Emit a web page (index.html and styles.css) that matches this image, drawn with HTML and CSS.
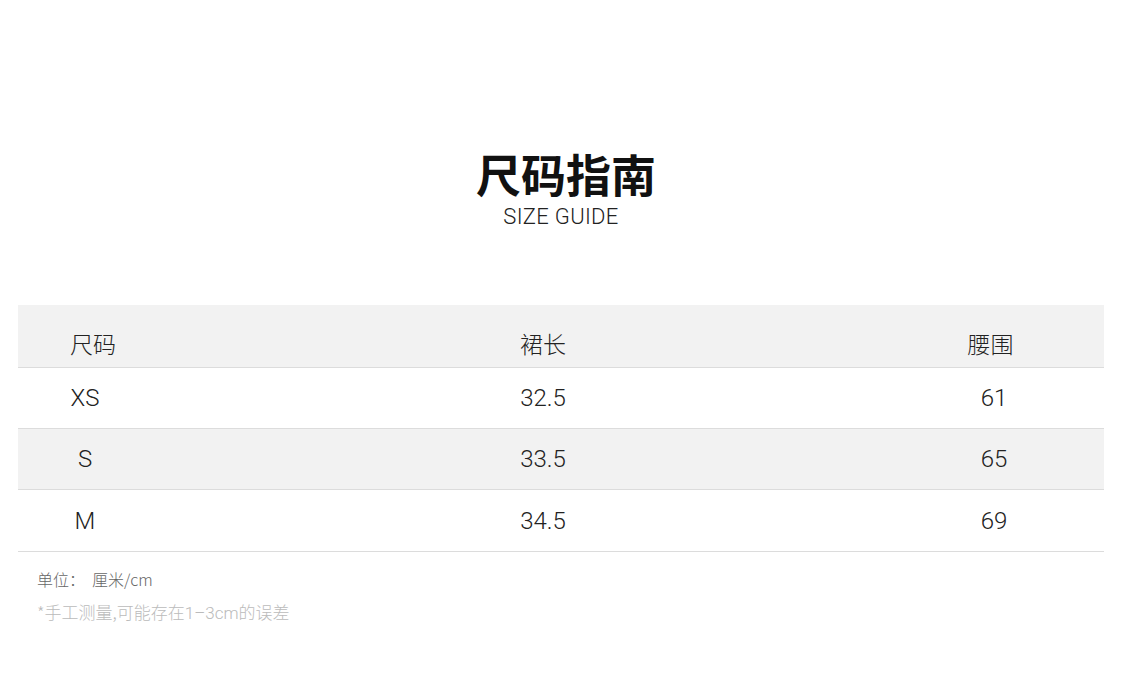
FILE: index.html
```html
<!DOCTYPE html>
<html lang="zh-CN">
<head>
<meta charset="utf-8">
<title>尺码指南</title>
<link rel="stylesheet" href="styles.css">
</head>
<body>
<div class="page">
  <header class="title">
    <h1 class="title-cn">尺码指南</h1>
    <div class="title-en">SIZE GUIDE</div>
  </header>
  <div class="table">
    <div class="row head">
      <div class="cell c1">尺码</div>
      <div class="cell c2">裙长</div>
      <div class="cell c3">腰围</div>
    </div>
    <div class="row">
      <div class="cell c1">XS</div>
      <div class="cell c2">32.5</div>
      <div class="cell c3">61</div>
    </div>
    <div class="row alt">
      <div class="cell c1">S</div>
      <div class="cell c2">33.5</div>
      <div class="cell c3">65</div>
    </div>
    <div class="row last">
      <div class="cell c1">M</div>
      <div class="cell c2">34.5</div>
      <div class="cell c3">69</div>
    </div>
  </div>
  <div class="notes">
    <p class="unit">单位：<span class="unit-val">厘米/cm</span></p>
    <p class="hint">*手工测量,可能存在<span class="num">1–3cm</span>的误差</p>
  </div>
</div>
</body>
</html>
```

FILE: styles.css
```css
html, body {
  margin: 0;
  padding: 0;
  background: #ffffff;
}
body {
  font-family: Roboto, "Noto Sans CJK SC", sans-serif;
  color: #222;
}
.page {
  padding: 148px 22px 0 18px;
}
.title {
  display: flex;
  flex-direction: column;
  align-items: center;
  padding-left: 10px;
}
.title-cn {
  margin: 0;
  font-family: "Noto Sans CJK SC", sans-serif;
  font-weight: 700;
  font-size: 45px;
  line-height: 52px;
  color: #111;
}
.title-en {
  margin-top: 5px;
  margin-right: 10px;
  font-family: Roboto, "Liberation Sans", sans-serif;
  font-weight: 300;
  font-size: 22px;
  line-height: 24px;
  letter-spacing: 0.3px;
  color: #222;
}
.table {
  margin-top: 76px;
}
.row {
  box-sizing: border-box;
  display: grid;
  grid-template-columns: 134px 782px 120px 1fr;
  height: 61px;
  border-bottom: 1px solid #dcdcdc;
  align-items: center;
  font-size: 24px;
  font-weight: 300;
  color: #222;
}
.row.head {
  background: #f2f2f2;
  padding-top: 14px;
  height: 63px;
}
.row.alt {
  background: #f2f2f2;
}
.row.last {
  height: 62px;
}
.cell {
  text-align: center;
  line-height: 24px;
}
.head .cell {
  font-family: "Noto Sans CJK SC", sans-serif;
  font-weight: 300;
  font-size: 23px;
}
.head .c1 {
  padding-left: 16px;
}
.head .c3 {
  padding-right: 7px;
}
.notes {
  padding-left: 19px;
  padding-top: 18px;
}
.notes p {
  margin: 0;
  font-family: "Noto Sans CJK SC", sans-serif;
  font-weight: 300;
  font-size: 16px;
  line-height: 18px;
}
.unit {
  color: #666;
}
.unit-val {
  margin-left: 7px;
}
.hint {
  margin-top: 15px !important;
  color: #bbb;
  font-size: 17px !important;
}
.num {
  font-family: Roboto, sans-serif;
  font-weight: 300;
}
```
